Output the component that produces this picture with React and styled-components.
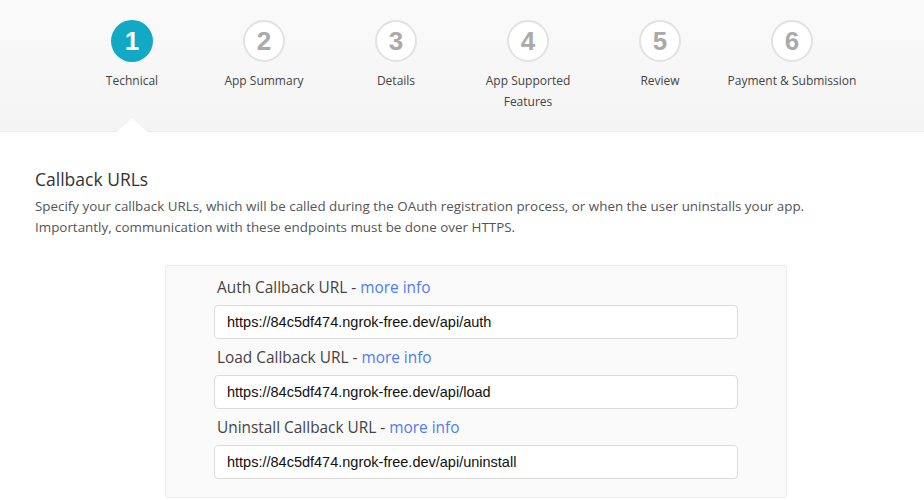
import React from 'react'
import styled, { createGlobalStyle } from 'styled-components'

const Global = createGlobalStyle`
  body {
    margin: 0;
    background: #fff;
    font-family: "Open Sans", "Liberation Sans", sans-serif;
  }
`

const Page = styled.div`
  width: 924px;
  height: 500px;
  overflow: hidden;
`

const Header = styled.div`
  position: relative;
  height: 132px;
  background: linear-gradient(#fafafa, #f4f4f4);
  border-bottom: 1px solid #ececec;
  box-sizing: border-box;
  display: flex;
  justify-content: center;
`

const Caret = styled.div`
  position: absolute;
  left: 117px;
  bottom: -1px;
  width: 0;
  height: 0;
  border-left: 15px solid transparent;
  border-right: 15px solid transparent;
  border-bottom: 14px solid #fff;
`

const Step = styled.div`
  width: 132px;
  display: flex;
  flex-direction: column;
  align-items: center;
  padding-top: 20px;
`

const Circle = styled.div`
  width: 42px;
  height: 42px;
  border-radius: 50%;
  box-sizing: border-box;
  display: flex;
  align-items: center;
  justify-content: center;
  font-family: "Liberation Sans", Arial, sans-serif;
  font-weight: bold;
  font-size: 26px;
  background: ${p => (p.$active ? '#12a9c4' : '#fff')};
  color: ${p => (p.$active ? '#fff' : '#aaa')};
  border: ${p => (p.$active ? 'none' : '2px solid #e2e2e2')};
`

const StepLabel = styled.div`
  margin-top: 8px;
  font-size: 12px;
  line-height: 21px;
  color: #444;
  text-align: center;
  width: 133px;
`

const Content = styled.div`
  padding: 0 35px;
`

const Title = styled.h2`
  margin: 34px 0 0;
  font-weight: normal;
  font-size: 17.5px;
  line-height: 26px;
  color: #333;
`

const Desc = styled.p`
  margin: 4px 0 0;
  font-size: 13.4px;
  line-height: 21px;
  color: #555;
`

const Box = styled.div`
  width: 622px;
  margin: 27px 0 0 165px;
  box-sizing: border-box;
  background: #fafafa;
  border: 1px solid #ececec;
  border-radius: 3px;
  padding: 12px 48px 18px;
`

const Field = styled.div`
  & + & {
    margin-top: 9px;
  }
`

const Label = styled.div`
  padding-left: 3px;
  font-size: 15.4px;
  line-height: 20px;
  color: #444;
`

const Link = styled.a`
  color: #4d7cf3;
  text-decoration: none;
`

const Input = styled.input`
  display: block;
  width: 100%;
  height: 34px;
  margin-top: 7px;
  box-sizing: border-box;
  border: 1px solid #dcdcdc;
  border-radius: 4px;
  background: #fff;
  padding: 0 12px;
  font-family: "Liberation Sans", Arial, sans-serif;
  font-size: 14.5px;
  color: #111;
  outline: none;
`

const steps = [
  'Technical',
  'App Summary',
  'Details',
  'App Supported Features',
  'Review',
  'Payment & Submission',
]

const fields = [
  ['Auth Callback URL', 'https://84c5df474.ngrok-free.dev/api/auth'],
  ['Load Callback URL', 'https://84c5df474.ngrok-free.dev/api/load'],
  ['Uninstall Callback URL', 'https://84c5df474.ngrok-free.dev/api/uninstall'],
]

export default function App() {
  return (
    <Page>
      <Global />
      <Header>
        {steps.map((s, i) => (
          <Step key={s}>
            <Circle $active={i === 0}>{i + 1}</Circle>
            <StepLabel>{s}</StepLabel>
          </Step>
        ))}
        <Caret />
      </Header>
      <Content>
        <Title>Callback URLs</Title>
        <Desc>
          Specify your callback URLs, which will be called during the OAuth registration process, or when the user uninstalls your app.
          <br />
          Importantly, communication with these endpoints must be done over HTTPS.
        </Desc>
      </Content>
      <Box>
        {fields.map(([label, value]) => (
          <Field key={label}>
            <Label>
              {label} - <Link href="#">more info</Link>
            </Label>
            <Input defaultValue={value} readOnly />
          </Field>
        ))}
      </Box>
    </Page>
  )
}
